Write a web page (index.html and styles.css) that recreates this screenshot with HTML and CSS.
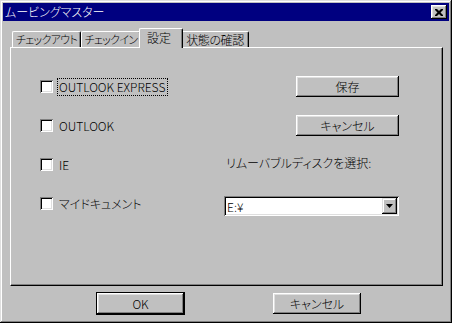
FILE: index.html
```html
<!DOCTYPE html>
<html lang="ja">
<head>
    <meta charset="UTF-8">
    <title>ムービングマスター</title>
    <link rel="stylesheet" href="styles.css">
</head>
<body>
    <div class="window">
        <div class="titlebar">
            <span class="title">ムービングマスター</span>
            <span class="close-btn">
                <svg width="8" height="7" viewBox="0 0 8 7"><path d="M0 0h2l2 2 2-2h2v1l-2.5 2.5L8 6v1H6L4 5 2 7H0V6l2.5-2.5L0 1z" fill="#000"/></svg>
            </span>
        </div>

        <div class="content">
            <div class="tabs">
                <div class="tab tab-out">チェックアウト</div>
                <div class="tab tab-in">チェックイン</div>
                <div class="tab tab-set active">設定</div>
                <div class="tab tab-state">状態の確認</div>
            </div>

            <div class="panel">
                <div class="form-grid">
                    <label class="check"><span class="box"></span><span class="check-label focus">OUTLOOK EXPRESS</span></label>
                    <div class="right"><button class="btn">保存</button></div>

                    <label class="check"><span class="box"></span><span class="check-label">OUTLOOK</span></label>
                    <div class="right"><button class="btn">キャンセル</button></div>

                    <label class="check"><span class="box"></span><span class="check-label">IE</span></label>
                    <div class="disk-label">リムーバブルディスクを選択:</div>

                    <label class="check"><span class="box"></span><span class="check-label">マイドキュメント</span></label>
                    <div class="combo">
                        <span class="combo-value">E:¥</span>
                        <span class="combo-arrow">
                            <svg width="7" height="4" viewBox="0 0 7 4"><path d="M0 0h7L3.5 4z" fill="#000"/></svg>
                        </span>
                    </div>
                </div>
            </div>

            <div class="footer">
                <button class="btn btn-default">OK</button>
                <button class="btn btn-cancel">キャンセル</button>
            </div>
        </div>
    </div>
</body>
</html>
```

FILE: styles.css
```css
body {
    margin: 0;
    padding: 0;
    background-color: #c0c0c0;
    font-family: "Noto Sans CJK JP", "Liberation Sans", sans-serif;
    font-size: 12px;
    font-weight: 300;
    font-feature-settings: "palt";
    color: #000;
}

.window {
    width: 452px;
    height: 323px;
    box-sizing: border-box;
    padding: 3px;
    background-color: #c0c0c0;
    box-shadow: inset -1px -1px #000, inset 1px 1px #dfdfdf,
                inset -2px -2px #808080, inset 2px 2px #fff;
}

.titlebar {
    height: 18px;
    background-color: #000080;
    color: #fff;
    display: flex;
    align-items: center;
    justify-content: space-between;
    padding: 0 2px 0 2px;
}

.title {
    line-height: 18px;
}

.close-btn {
    width: 16px;
    height: 14px;
    background-color: #c0c0c0;
    box-shadow: inset -1px -1px #000, inset 1px 1px #fff,
                inset -2px -2px #808080, inset 2px 2px #dfdfdf;
    display: flex;
    align-items: center;
    justify-content: center;
}

.close-btn svg {
    display: block;
    margin-left: -1px;
}

.content {
    padding: 7px 6px 0 7px;
}

/* Tabs */
.tabs {
    display: flex;
    align-items: flex-end;
    height: 20px;
    padding-left: 2px;
    position: relative;
    z-index: 1;
    margin-bottom: -1px;
}

.tab {
    height: 16px;
    line-height: 15px;
    box-sizing: border-box;
    white-space: nowrap;
    font-size: 11px;
    letter-spacing: -0.7px;
    text-align: center;
    background-color: #c0c0c0;
    border-top: 1px solid #fff;
    border-left: 1px solid #fff;
    border-right: 1px solid #000;
    border-top-left-radius: 2px;
    border-top-right-radius: 2px;
    box-shadow: inset -1px 0 #808080;
    margin-bottom: 1px;
}

.tab-out { width: 69px; }
.tab-in { width: 60px; }
.tab-set { width: 40px; font-size: 12px; letter-spacing: 0; }
.tab-state { width: 68px; font-size: 12px; letter-spacing: -0.4px; }

.tab.active {
    height: 20px;
    line-height: 17px;
    width: 44px;
    margin: 0 -2px;
    margin-bottom: 0;
    position: relative;
    z-index: 2;
    padding-right: 4px;
}

.panel {
    height: 239px;
    box-sizing: border-box;
    border-top: 1px solid #fff;
    border-left: 1px solid #fff;
    border-right: 1px solid #000;
    border-bottom: 1px solid #000;
    box-shadow: inset -1px -1px #808080;
    padding: 19px 0 0 29px;
}

.form-grid {
    display: grid;
    grid-template-columns: 184px 175px;
    grid-auto-rows: 39px;
    align-items: center;
}

.check {
    display: flex;
    align-items: center;
}

.box {
    width: 13px;
    height: 13px;
    box-sizing: border-box;
    background-color: #fff;
    box-shadow: inset 1px 1px #808080, inset -1px -1px #fff,
                inset 2px 2px #000, inset -2px -2px #dfdfdf;
    margin-right: 4px;
}

.check-label {
    padding: 1px 2px 1px 1px;
    border: 1px dotted transparent;
    line-height: 14px;
}

.check-label.focus {
    border-color: #000;
}

.right {
    display: flex;
    justify-content: flex-end;
}

.btn {
    font: inherit;
    font-feature-settings: "palt";
    color: #000;
    width: 103px;
    height: 21px;
    padding: 0;
    border: none;
    background-color: #c0c0c0;
    box-shadow: inset -1px -1px #000, inset 1px 1px #fff,
                inset -2px -2px #808080, inset 2px 2px #dfdfdf;
}

.disk-label {
    padding-left: 2px;
    margin-top: -4px;
}

.combo {
    height: 20px;
    margin-top: 5px;
    box-sizing: border-box;
    background-color: #fff;
    box-shadow: inset 1px 1px #808080, inset -1px -1px #fff,
                inset 2px 2px #000, inset -2px -2px #dfdfdf;
    display: flex;
    align-items: center;
    justify-content: space-between;
    padding: 2px 2px 2px 3px;
}

.combo-value {
    line-height: 15px;
}

.combo-arrow {
    width: 15px;
    height: 16px;
    background-color: #c0c0c0;
    box-shadow: inset -1px -1px #000, inset 1px 1px #dfdfdf,
                inset -2px -2px #808080, inset 2px 2px #fff;
    display: flex;
    align-items: center;
    justify-content: center;
}

.footer {
    display: flex;
    align-items: flex-start;
    gap: 88px;
    padding: 6px 0 0 86px;
}

.btn-default {
    width: 89px;
    height: 23px;
    border: 1px solid #000;
}

.btn-cancel {
    width: 88px;
    margin-top: 1px;
}
```
